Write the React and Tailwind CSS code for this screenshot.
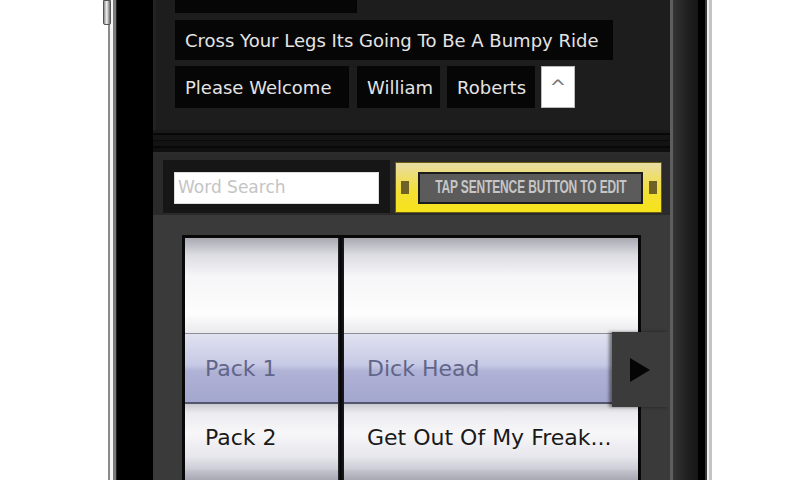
export default function App() {
  return (
    <div className="w-[800px] h-[480px] bg-white flex overflow-hidden relative font-['DejaVu_Sans',sans-serif]">
      {/* side switch */}
      <div className="absolute left-[103px] top-0 w-[8px] h-[25px] rounded-b-[2px] border border-[#555] bg-[linear-gradient(to_right,#8a8a8a,#f2f2f2_45%,#6a6a6a)]" />
      <div className="w-[108px] shrink-0" />
      {/* left frame */}
      <div className="w-[2px] shrink-0 bg-[#8a8a8a]" />
      <div className="w-[3px] shrink-0 bg-[#f4f4f4]" />
      <div className="w-[3px] shrink-0 bg-[#7a7a7a]" />
      <div className="w-[1px] shrink-0 bg-[#222]" />
      {/* left bezel */}
      <div className="w-[36px] shrink-0 bg-black" />

      {/* screen */}
      <div className="w-[517px] shrink-0 h-full flex flex-col">
        {/* sentence area */}
        <div className="h-[130px] shrink-0 bg-[#1d1d1d] overflow-hidden pl-[22px] border-l-[3px] border-[#232323]">
          <div className="flex flex-col mt-[-27px] ml-[-3px]">
            <div className="h-[40px] w-[182px] bg-[#060606]" />
            <div className="mt-[7px] h-[40px] w-[438px] bg-[#060606] flex items-center pl-[10px] text-[18px] text-[#e4e4e4] whitespace-nowrap">
              Cross Your Legs Its Going To Be A Bumpy Ride
            </div>
            <div className="mt-[6px] flex h-[42px]">
              <div className="w-[174px] bg-[#060606] flex items-center pl-[10px] text-[18px] text-[#e4e4e4] whitespace-nowrap">
                Please Welcome
              </div>
              <div className="ml-[8px] w-[83px] bg-[#060606] flex items-center pl-[10px] text-[18px] text-[#e4e4e4] whitespace-nowrap">
                William
              </div>
              <div className="ml-[7px] w-[88px] bg-[#060606] flex items-center pl-[10px] text-[18px] text-[#e4e4e4] whitespace-nowrap">
                Roberts
              </div>
              <div className="ml-[6px] w-[34px] bg-white border border-[#bbb] flex items-center justify-center text-[20px] text-[#777]">
                ^
              </div>
            </div>
          </div>
        </div>

        {/* separator band */}
        <div className="h-[25px] shrink-0 flex flex-col bg-[#121212]">
          <div className="h-[3px] bg-[#191919]" />
          <div className="h-[2px] bg-[#070707]" />
          <div className="h-[5px] bg-[#151515]" />
          <div className="h-[1px] bg-[#0a0a0a]" />
          <div className="h-[5px] bg-[#131313]" />
          <div className="h-[2px] bg-[#080808]" />
          <div className="h-[4px] bg-[#101010]" />
          <div className="h-[3px] bg-[#2c2c2c]" />
        </div>

        {/* toolbar */}
        <div className="h-[60px] shrink-0 bg-[#2a2a2a] flex items-start">
          <div className="ml-[10px] mt-[5px] w-[227px] h-[53px] bg-[#161616] flex items-start pt-[12px] pl-[11px]">
            <div className="w-[205px] h-[32px] bg-white border border-[#ddd] flex items-center pl-[3px] text-[17px] text-[#c4c4c4] whitespace-nowrap">
              Word Search
            </div>
          </div>
          <div className="ml-[5px] mt-[7px] w-[267px] h-[51px] border border-[#6a5c10] bg-[linear-gradient(to_bottom,#e8dca6_0%,#efde6a_30%,#f4e030_60%,#f6e31c_100%)] flex items-center">
            <div className="ml-[5px] w-[8px] h-[13px] bg-[#6e6226]" />
            <div className="ml-[9px] w-[225px] h-[32px] bg-[#5b5b5b] border-2 border-[#1c1c1c] flex items-center justify-center overflow-visible">
              <span className="inline-block scale-x-[0.63] whitespace-nowrap font-['Liberation_Sans',sans-serif] font-bold text-[19px] text-[#c6c6c6] tracking-[-0.2px]">
                TAP SENTENCE BUTTON TO EDIT
              </span>
            </div>
            <div className="ml-[6px] w-[8px] h-[13px] bg-[#6e6226]" />
          </div>
        </div>

        {/* picker area */}
        <div className="flex-1 relative bg-[#3a3a3a] pt-[20px] px-[29px]">
          <div className="h-full flex border-[3px] border-b-0 border-[#080808]">
            {/* column 1 */}
            <div className="w-[153px] flex flex-col">
              <div className="h-[95px] bg-[linear-gradient(to_bottom,#a9a9b2_0%,#dcdce2_18%,#f6f6f8_40%,#fdfdfd_80%,#eaeaee_100%)]" />
              <div className="h-[71px] flex items-center pl-[20px] text-[22px] text-[#62658a] border-t border-[#8e8e96] border-b-2 border-b-[#55566e] bg-[linear-gradient(to_bottom,#e0e2f0_0%,#c6c9e4_46%,#b0b3d6_54%,#a4a7cd_100%)]">
                Pack 1
              </div>
              <div className="h-[66px] flex items-center pl-[20px] text-[22px] text-[#1a1a1a] bg-[linear-gradient(to_bottom,#c8c8d0_0%,#ececf0_14%,#f7f7f9_45%,#e6e6ec_80%,#cacad4_100%)]">
                Pack 2
              </div>
              <div className="flex-1 bg-[linear-gradient(to_bottom,#c4c4ce,#a8a8b4)]" />
            </div>
            {/* divider */}
            <div className="w-[6px] bg-[linear-gradient(to_right,#2a2a30,#050505_40%,#1a1a22)]" />
            {/* column 2 */}
            <div className="flex-1 flex flex-col">
              <div className="h-[95px] bg-[linear-gradient(to_bottom,#a9a9b2_0%,#dcdce2_18%,#f6f6f8_40%,#fdfdfd_80%,#eaeaee_100%)]" />
              <div className="h-[71px] flex items-center pl-[23px] text-[22px] text-[#62658a] border-t border-[#8e8e96] border-b-2 border-b-[#55566e] bg-[linear-gradient(to_bottom,#e0e2f0_0%,#c6c9e4_46%,#b0b3d6_54%,#a4a7cd_100%)] whitespace-nowrap">
                Dick Head
              </div>
              <div className="h-[66px] flex items-center pl-[23px] text-[22px] text-[#1a1a1a] bg-[linear-gradient(to_bottom,#c8c8d0_0%,#ececf0_14%,#f7f7f9_45%,#e6e6ec_80%,#cacad4_100%)] whitespace-nowrap">
                Get Out Of My Freak...
              </div>
              <div className="flex-1 bg-[linear-gradient(to_bottom,#c4c4ce,#a8a8b4)]" />
            </div>
          </div>

          {/* arrow tab */}
          <div className="absolute left-[459px] top-[117px] w-[58px] h-[75px] bg-[#3b3b3b] shadow-[-3px_0_3px_rgba(0,0,0,0.45)]">
            <svg className="absolute left-[18px] top-[26px]" width="20" height="24" viewBox="0 0 20 24">
              <polygon points="0,0 20,12 0,24" fill="#050505" />
            </svg>
          </div>
        </div>
      </div>

      {/* right bezel */}
      <div className="w-[35px] shrink-0 flex">
        <div className="w-[3px] bg-[#5e5e5e]" />
        <div className="w-[25px] bg-[linear-gradient(to_right,#343434,#222_50%,#161616)]" />
        <div className="w-[7px] bg-black" />
      </div>
      {/* right frame */}
      <div className="w-[2px] shrink-0 bg-[#3a3a3a]" />
      <div className="w-[2px] shrink-0 bg-[#f2f2f2]" />
      <div className="w-[3px] shrink-0 bg-[#c4c4c4]" />
    </div>
  );
}
